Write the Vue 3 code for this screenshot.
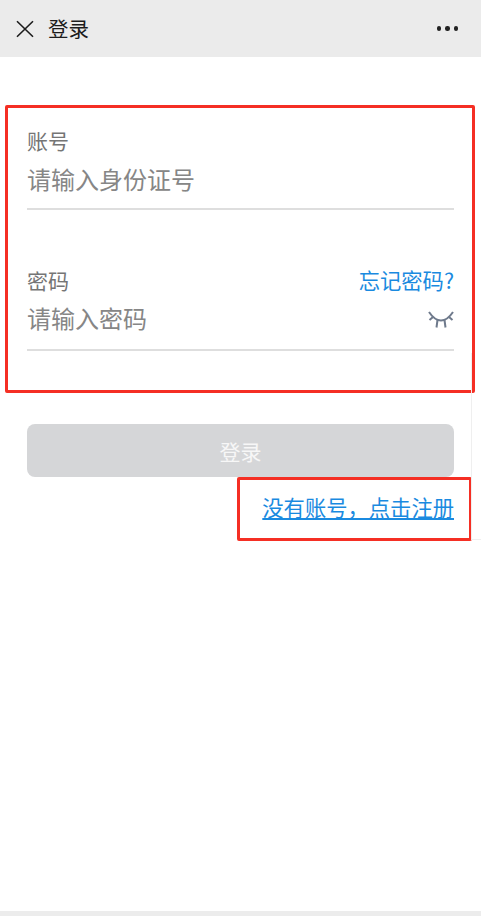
<template>
  <div class="page">
    <header class="nav">
      <button class="nav-close" aria-label="关闭">
        <svg width="18" height="18" viewBox="0 0 18 18" fill="none" stroke="#1c1c1c" stroke-width="1.6">
          <path d="M1 1.2 17 16.8M17 1.2 1 16.8" />
        </svg>
      </button>
      <h1 class="nav-title">登录</h1>
      <div class="nav-more"><i></i><i></i><i></i></div>
    </header>

    <main class="content">
      <div class="field">
        <label class="field-label">账号</label>
        <div class="field-input">
          <input type="text" placeholder="请输入身份证号" />
        </div>
      </div>

      <div class="field field-password">
        <div class="field-head">
          <label class="field-label">密码</label>
          <a class="forgot">忘记密码?</a>
        </div>
        <div class="field-input">
          <input type="password" placeholder="请输入密码" />
          <svg class="eye" width="26" height="18" viewBox="0 0 26 18" fill="none" stroke="#6f7a8c" stroke-width="2">
            <path d="M1 1C5 7 9 9.5 13 9.5S21 7 25 1" />
            <path d="M5 6 1.5 9M21 6 24.5 9M9.5 9 8.5 16.5M16.5 9 17.5 16.5" />
          </svg>
        </div>
      </div>

      <button class="submit">登录</button>

      <div class="register">
        <a>没有账号，点击注册</a>
      </div>
    </main>

    <div class="mark mark-form"></div>
    <div class="mark mark-register"></div>
    <div class="ghost-line"></div>
    <footer class="bottom-bar"></footer>
  </div>
</template>

<script setup>
</script>

<style>
html,
body {
  margin: 0;
  background: #fff;
}
</style>

<style scoped>
.page {
  position: relative;
  display: flex;
  flex-direction: column;
  width: 481px;
  height: 916px;
  overflow: hidden;
  background: #fff;
  font-family: "Noto Sans CJK SC", "Liberation Sans", sans-serif;
}

.nav {
  display: flex;
  align-items: center;
  flex-shrink: 0;
  height: 57px;
  padding: 0 23px 0 16px;
  box-sizing: border-box;
  background: #ebebeb;
}

.nav-close {
  display: flex;
  width: 18px;
  height: 18px;
  padding: 0;
  border: none;
  background: none;
}

.nav-title {
  flex: 1;
  margin: -2px 0 0 14px;
  font-size: 20.5px;
  font-weight: 400;
  line-height: 28px;
  color: #1c1c1c;
}

.nav-more {
  display: flex;
  gap: 4px;
}

.nav-more i {
  width: 4.5px;
  height: 4.5px;
  border-radius: 50%;
  background: #222;
}

.content {
  flex: 1;
  padding: 69px 27px 0;
}

.field-label {
  display: block;
  font-size: 21px;
  line-height: 28px;
  color: #757575;
}

.field-input {
  display: flex;
  align-items: center;
  height: 36px;
  margin-top: 6px;
  padding-bottom: 12px;
  border-bottom: 2px solid #dedede;
}

.field-input input {
  flex: 1;
  min-width: 0;
  height: 36px;
  padding: 0;
  border: none;
  outline: none;
  background: none;
  font-family: inherit;
  font-size: 24px;
  color: #333;
}

.field-input input::placeholder {
  color: #868686;
  opacity: 1;
}

.field-password {
  margin-top: 56px;
}

.field-password .field-input {
  margin-top: 5px;
  padding-bottom: 14px;
}

.field-head {
  display: flex;
  justify-content: space-between;
  align-items: center;
}

.forgot {
  font-size: 21.3px;
  line-height: 28px;
  color: #1a8ae0;
}

.eye {
  flex-shrink: 0;
  margin-top: 6px;
}

.submit {
  display: block;
  width: 100%;
  height: 53px;
  margin-top: 73px;
  padding: 0;
  border: none;
  border-radius: 8px;
  background: #d5d6d8;
  font-family: inherit;
  font-size: 21px;
  color: #f7f7f7;
}

.register {
  display: flex;
  justify-content: flex-end;
  margin-top: 14px;
}

.register a {
  font-size: 21.3px;
  line-height: 32px;
  color: #1a8ae0;
  text-decoration: underline;
  text-underline-offset: 2px;
}

/* red annotation boxes drawn on top of the screenshot */
.mark {
  position: absolute;
  box-sizing: border-box;
  border: 3px solid #f52f24;
  border-radius: 2px;
  pointer-events: none;
}

.mark-form {
  left: 5px;
  top: 105px;
  width: 470px;
  height: 288px;
}

.mark-register {
  left: 237px;
  top: 477px;
  width: 235px;
  height: 64px;
}

.ghost-line {
  position: absolute;
  left: 471px;
  top: 353px;
  width: 10px;
  height: 187px;
  box-sizing: border-box;
  border-left: 1px solid #efefef;
  border-bottom: 1px solid #efefef;
}

.bottom-bar {
  flex-shrink: 0;
  height: 5px;
  background: #ececec;
}
</style>
